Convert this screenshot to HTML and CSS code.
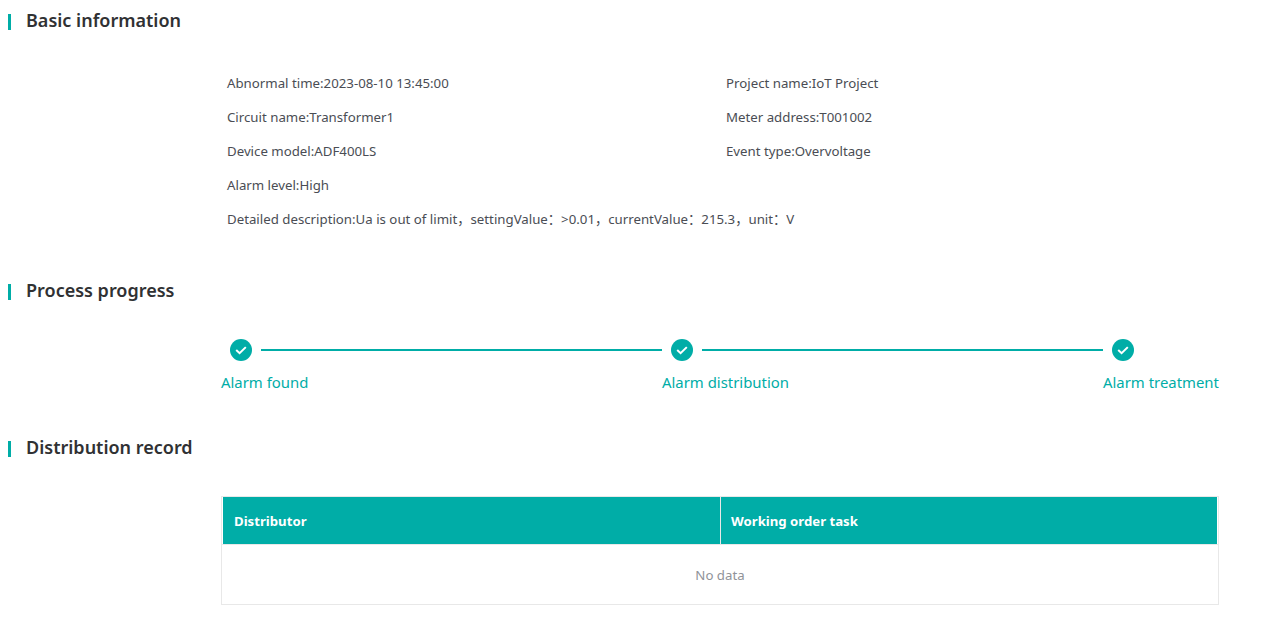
FILE: index.html
```html
<!DOCTYPE html>
<html lang="en">
<head>
<meta charset="utf-8">
<title>Alarm detail</title>
<link rel="stylesheet" href="styles.css">
</head>
<body>
<section class="section section-basic">
  <h2 class="title">Basic information</h2>
  <div class="info">
    <div>Abnormal time:2023-08-10 13:45:00</div>
    <div>Project name:IoT Project</div>
    <div>Circuit name:Transformer1</div>
    <div>Meter address:T001002</div>
    <div>Device model:ADF400LS</div>
    <div>Event type:Overvoltage</div>
    <div class="wide">Alarm level:High</div>
    <div class="wide">Detailed description:Ua is out of limit，settingValue：&gt;0.01，currentValue：215.3，unit：V</div>
  </div>
</section>
<section class="section section-progress">
  <h2 class="title">Process progress</h2>
  <div class="steps">
    <div class="step">
      <div class="step-head">
        <span class="dot"><svg viewBox="0 0 22 22" width="22" height="22"><path d="M6.2 11l3.4 3.2 6.2-6.1" fill="none" stroke="#fff" stroke-width="2"/></svg></span>
        <span class="line"></span>
      </div>
      <div class="step-label">Alarm found</div>
    </div>
    <div class="step">
      <div class="step-head">
        <span class="dot"><svg viewBox="0 0 22 22" width="22" height="22"><path d="M6.2 11l3.4 3.2 6.2-6.1" fill="none" stroke="#fff" stroke-width="2"/></svg></span>
        <span class="line"></span>
      </div>
      <div class="step-label">Alarm distribution</div>
    </div>
    <div class="step">
      <div class="step-head">
        <span class="dot"><svg viewBox="0 0 22 22" width="22" height="22"><path d="M6.2 11l3.4 3.2 6.2-6.1" fill="none" stroke="#fff" stroke-width="2"/></svg></span>
      </div>
      <div class="step-label">Alarm treatment</div>
    </div>
  </div>
</section>
<section class="section">
  <h2 class="title">Distribution record</h2>
  <div class="table">
    <div class="thead">
      <div class="th">Distributor</div>
      <div class="th">Working order task</div>
    </div>
    <div class="empty">No data</div>
  </div>
</section>
</body>
</html>
```

FILE: styles.css
```css
* { box-sizing: border-box; }
html, body { margin: 0; padding: 0; background: #fff; }
body {
  font-family: "Noto Sans", "Noto Sans CJK SC", "Open Sans", sans-serif;
  color: #303133;
  width: 1279px;
  height: 628px;
  overflow: hidden;
  padding: 8px 60px 0 8px;
}
.title {
  margin: 0;
  height: 24px;
  line-height: 24px;
  font-size: 18px;
  font-weight: 600;
  color: #303133;
  display: flex;
  align-items: center;
  gap: 15px;
}
.title::before {
  content: "";
  width: 3px;
  height: 16px;
  margin-top: 4px;
  background: #00ada7;
}
.info {
  margin: 34px 0 0 219px;
  display: grid;
  grid-template-columns: 499px 1fr;
  grid-auto-rows: 34px;
  font-size: 13.25px;
  line-height: 34px;
  color: #4a4d54;
}
.wide { grid-column: 1 / -1; }
.section-basic { height: 270px; }
.section-progress { height: 157px; }
.steps {
  margin: 36px 0 0 213px;
  display: grid;
  grid-template-columns: 441px 441px 116px;
}
.step-head {
  display: flex;
  align-items: center;
  height: 24px;
  padding-left: 9px;
}
.dot {
  width: 22px;
  height: 22px;
  border-radius: 50%;
  background: #00ada7;
  flex: none;
  display: block;
}
.dot svg { display: block; }
.line {
  flex: 1;
  height: 2px;
  margin-left: 9px;
  background: #00ada7;
}
.step-label {
  margin-top: 9px;
  font-size: 14.9px;
  line-height: 22px;
  color: #00ada7;
  white-space: nowrap;
}
.table {
  margin: 37px 0 0 213px;
  width: 998px;
  border: 1px solid #e8e8e8;
}
.thead {
  display: grid;
  grid-template-columns: 497px 1fr;
  height: 47px;
  margin: 0 1px;
  background: #00ada7;
}
.th {
  padding-left: 11px;
  font-size: 13.2px;
  font-weight: 700;
  line-height: 48px;
  color: #fff;
}
.th + .th {
  border-left: 1px solid #e8e8e8;
  padding-left: 10px;
}
.empty {
  height: 60px;
  border-top: 1px solid #e8e8e8;
  text-align: center;
  font-size: 13.25px;
  line-height: 60px;
  color: #909399;
}
```
